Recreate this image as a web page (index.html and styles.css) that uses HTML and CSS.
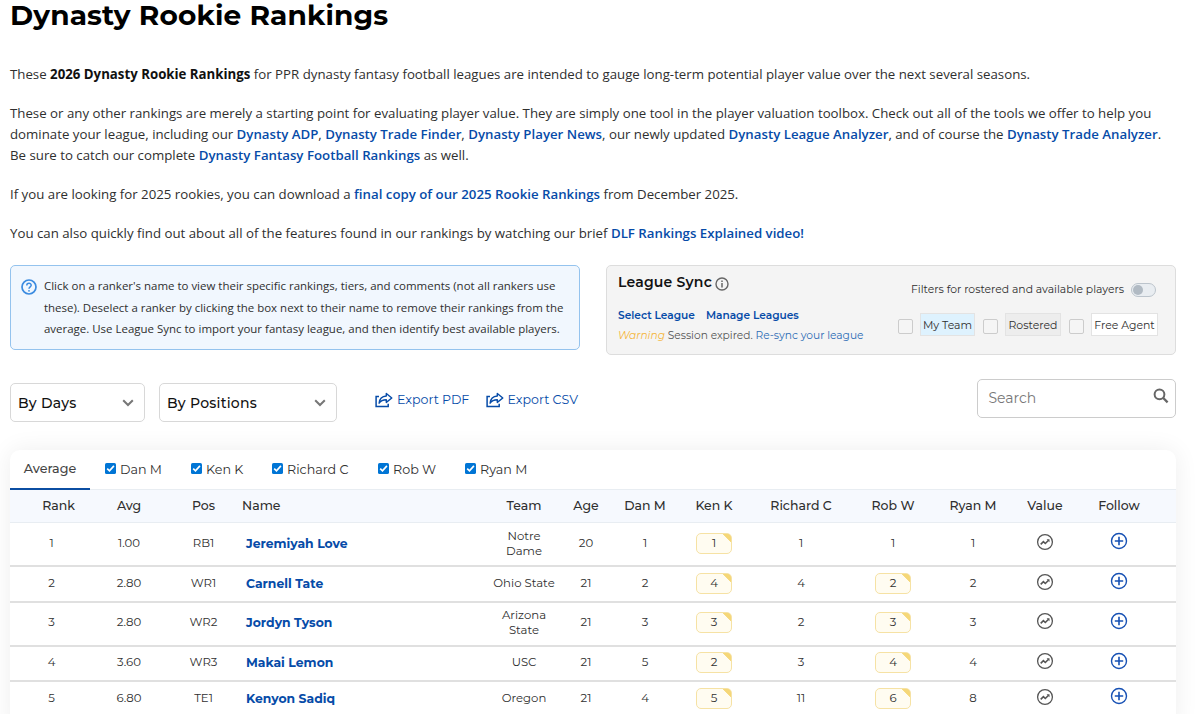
FILE: index.html
```
<!DOCTYPE html>
<html lang="en">
<head>
<meta charset="utf-8">
<title>Dynasty Rookie Rankings</title>
<link rel="stylesheet" href="styles.css">
</head>
<body>
<svg class="defs" aria-hidden="true">
  <symbol id="trend" viewBox="0 0 18 18"><circle cx="9" cy="9" r="7.4" fill="none" stroke="currentColor" stroke-width="1.3"/><path d="M4.7 11.3 7.4 8.7 9.3 10.5 12.6 7.2" fill="none" stroke="currentColor" stroke-width="1.6"/><path d="M10.6 6.3H13.5V9.2Z" fill="currentColor"/></symbol>
  <symbol id="plus" viewBox="0 0 18 18"><circle cx="9" cy="9" r="7.5" fill="none" stroke="currentColor" stroke-width="1.4"/><path d="M9 4.8V13.2M4.8 9H13.2" stroke="currentColor" stroke-width="1.6"/></symbol>
  <symbol id="share" viewBox="0 0 18 16"><path d="M4 4.5H1.1V14.4H13.2V11.8" fill="none" stroke="currentColor" stroke-width="1.5"/><path d="M11.3 1.5 16.8 6 11.3 10.4V7.8C8 7.8 5.8 8.6 4.1 11.2 4.5 7 7 4.3 11.3 4Z" fill="none" stroke="currentColor" stroke-width="1.4" stroke-linejoin="round"/></symbol>
  <symbol id="chev" viewBox="0 0 12 8"><path d="M1.2 1.2 6 6 10.8 1.2" fill="none" stroke="currentColor" stroke-width="2"/></symbol>
  <symbol id="check" viewBox="0 0 11 11"><rect width="11" height="11" rx="1.6" fill="#0075d5"/><path d="M2.2 5.6 4.5 7.9 8.9 2.9" fill="none" stroke="#fff" stroke-width="1.6"/></symbol>
</svg>
<main class="page">
  <h1>Dynasty Rookie Rankings</h1>
  <section class="intro">
    <p>These <strong>2026 Dynasty Rookie Rankings</strong> for PPR dynasty fantasy football leagues are intended to gauge long-term potential player value over the next several seasons.</p>
    <p>These or any other rankings are merely a starting point for evaluating player value. They are simply one tool in the player valuation toolbox. Check out all of the tools we offer to help you<br>dominate your league, including our <a>Dynasty ADP</a>, <a>Dynasty Trade Finder</a>, <a>Dynasty Player News</a>, our newly updated <a>Dynasty League Analyzer</a>, and of course the <a>Dynasty Trade Analyzer</a>.<br>Be sure to catch our complete <a>Dynasty Fantasy Football Rankings</a> as well.</p>
    <p>If you are looking for 2025 rookies, you can download a <a>final copy of our 2025 Rookie Rankings</a> from December 2025.</p>
    <p>You can also quickly find out about all of the features found in our rankings by watching our brief <a>DLF Rankings Explained video!</a></p>
  </section>

  <section class="panels">
    <div class="tip">
      <svg class="tip-icon" viewBox="0 0 16 16"><circle cx="8" cy="8" r="7" fill="none" stroke="currentColor" stroke-width="1.7"/><path d="M5.8 6.4C5.8 3.6 10.2 3.6 10.2 6.3 10.2 7.9 8 7.9 8 9.7" fill="none" stroke="currentColor" stroke-width="1.5"/><circle cx="8" cy="11.8" r=".9" fill="currentColor"/></svg>
      <p>Click on a ranker's name to view their specific rankings, tiers, and comments (not all rankers use<br>these). Deselect a ranker by clicking the box next to their name to remove their rankings from the<br>average. Use League Sync to import your fantasy league, and then identify best available players.</p>
    </div>
    <div class="sync">
      <div class="sync-left">
        <h2>League Sync<svg class="info" viewBox="0 0 14 14"><circle cx="7" cy="7" r="6" fill="none" stroke="currentColor" stroke-width="1.4"/><path d="M7 6V10.6M7 3.4V5" stroke="currentColor" stroke-width="1.5"/></svg></h2>
        <div class="sync-links"><a>Select League</a><a>Manage Leagues</a></div>
        <div class="sync-msg"><em>Warning</em> Session expired. <a>Re-sync your league</a></div>
      </div>
      <div class="sync-right">
        <div class="switch-row"><span>Filters for rostered and available players</span><i class="switch"></i></div>
        <div class="filters">
          <i class="box"></i><span class="chip mine">My Team</span>
          <i class="box"></i><span class="chip rostered">Rostered</span>
          <i class="box"></i><span class="chip free">Free Agent</span>
        </div>
      </div>
    </div>
  </section>

  <section class="tools">
    <div class="select days"><span>By Days</span><svg><use href="#chev"/></svg></div>
    <div class="select positions"><span>By Positions</span><svg><use href="#chev"/></svg></div>
    <div class="exports">
      <a><svg><use href="#share"/></svg>Export PDF</a>
      <a><svg><use href="#share"/></svg>Export CSV</a>
    </div>
    <div class="search"><span>Search</span><svg viewBox="0 0 16 16"><circle cx="6.5" cy="6.3" r="4.9" fill="none" stroke="currentColor" stroke-width="2"/><path d="M10 9.8 14.6 14.4" stroke="currentColor" stroke-width="2.3"/></svg></div>
  </section>

  <section class="card">
    <nav class="tabs">
      <span class="tab active">Average</span>
      <span class="tab t1"><svg><use href="#check"/></svg>Dan M</span>
      <span class="tab"><svg><use href="#check"/></svg>Ken K</span>
      <span class="tab"><svg><use href="#check"/></svg>Richard C</span>
      <span class="tab"><svg><use href="#check"/></svg>Rob W</span>
      <span class="tab"><svg><use href="#check"/></svg>Ryan M</span>
    </nav>
    <div class="row head"><span class="rank">Rank</span><span>Avg</span><span>Pos</span><span class="name">Name</span><span>Team</span><span>Age</span><span>Dan M</span><span>Ken K</span><span>Richard C</span><span>Rob W</span><span>Ryan M</span><span>Value</span><span>Follow</span></div>
    <div class="row tall"><span>1</span><span>1.00</span><span>RB1</span><a class="name">Jeremiyah Love</a><span class="team">Notre<br>Dame</span><span>20</span><span>1</span><b class="note">1</b><span>1</span><span>1</span><span>1</span><svg class="trend"><use href="#trend"/></svg><svg class="plus"><use href="#plus"/></svg></div>
    <div class="row"><span>2</span><span>2.80</span><span>WR1</span><a class="name">Carnell Tate</a><span>Ohio State</span><span>21</span><span>2</span><b class="note">4</b><span>4</span><b class="note">2</b><span>2</span><svg class="trend"><use href="#trend"/></svg><svg class="plus"><use href="#plus"/></svg></div>
    <div class="row tall"><span>3</span><span>2.80</span><span>WR2</span><a class="name">Jordyn Tyson</a><span class="team">Arizona<br>State</span><span>21</span><span>3</span><b class="note">3</b><span>2</span><b class="note">3</b><span>3</span><svg class="trend"><use href="#trend"/></svg><svg class="plus"><use href="#plus"/></svg></div>
    <div class="row"><span>4</span><span>3.60</span><span>WR3</span><a class="name">Makai Lemon</a><span>USC</span><span>21</span><span>5</span><b class="note">2</b><span>3</span><b class="note">4</b><span>4</span><svg class="trend"><use href="#trend"/></svg><svg class="plus"><use href="#plus"/></svg></div>
    <div class="row"><span>5</span><span>6.80</span><span>TE1</span><a class="name">Kenyon Sadiq</a><span>Oregon</span><span>21</span><span>4</span><b class="note">5</b><span>11</span><b class="note">6</b><span>8</span><svg class="trend"><use href="#trend"/></svg><svg class="plus"><use href="#plus"/></svg></div>
  </section>
</main>
</body>
</html>
```
FILE: styles.css
```
* { box-sizing: border-box; }
html, body { height: 714px; overflow: hidden; }
body { margin: 0; background: #fff; color: #2f2f2f; font-family: Montserrat, Inter, sans-serif; font-size: 12.5px; }
.defs { display: none; }
a { color: #064ba8; }
.page { padding: 0 24px 0 10px; }
h1 { margin: 0; height: 64px; font-size: 28px; line-height: 31px; font-weight: 700; color: #000; letter-spacing: .15px; white-space: nowrap; }

.intro { height: 201px; font-family: "Open Sans", sans-serif; font-size: 13.25px; line-height: 21.2px; }
.intro p { margin: 0 0 17.5px; white-space: nowrap; }
.intro strong { color: #111; }
.intro a { font-weight: 600; }

.panels { display: grid; grid-template-columns: 570px 570px; column-gap: 26px; align-items: start; height: 114px; }
.tip { display: flex; height: 85px; padding: 10px 0 0 10px; border: 1px solid #94c3ee; border-radius: 5px; background: #f1f7fe; }
.tip-icon { flex: none; width: 16px; height: 16px; margin: 3px 7px 0 0; color: #3b8be0; }
.tip p { margin: -1px 0 0; font-family: "Open Sans", sans-serif; font-size: 11.47px; line-height: 21.5px; white-space: nowrap; }
.sync { display: flex; justify-content: space-between; height: 90px; padding: 0 17px 0 11px; border: 1px solid #ddd; border-radius: 5px; background: #f4f4f4; white-space: nowrap; }
h2 { display: flex; align-items: center; margin: 7px 0 16px; font-size: 14px; line-height: 18px; font-weight: 600; color: #111; letter-spacing: .2px; }
.info { width: 14px; height: 14px; margin: 3px 0 0 3px; color: #666; }
.sync-links { display: flex; gap: 11px; font-size: 10.6px; line-height: 18px; font-weight: 600; }
.sync-msg { margin-top: 2px; font-size: 10.65px; line-height: 18px; color: #555; }
.sync-msg em { color: #f5b63c; }
.sync-msg a { color: #2c6cb4; }
.sync-right { display: flex; flex-direction: column; align-items: flex-end; }
.switch-row { display: flex; align-items: center; gap: 7px; height: 20px; margin: 13px 2px 14px 0; font-size: 10.8px; }
.switch { width: 25px; height: 14px; margin-top: 2px; padding: 1px; border: 1px solid #bcc4cc; border-radius: 7px; background: #e9edf1; }
.switch::before { content: ""; display: block; width: 10px; height: 10px; border-radius: 50%; background: #b1bac3; }
.filters { display: flex; align-items: center; height: 23px; font-size: 10.9px; }
.box { width: 15px; height: 15px; margin: 4px 7px 0 8px; border: 1px solid #ccc; border-radius: 2px; background: #f5f5f5; }
.chip { height: 23px; border: 1px solid #e3e3e3; line-height: 22px; text-align: center; }
.mine { width: 55px; background: #def2fe; }
.rostered { width: 56px; background: #ededed; }
.free { width: 67px; background: #fff; }

.tools { display: flex; align-items: flex-start; height: 71px; }
.select { display: flex; align-items: center; justify-content: space-between; height: 39px; margin: 4px 14px 0 0; padding: 0 10px 0 7px; border: 1px solid #d8d8d8; border-radius: 5px; font-size: 14px; font-weight: 500; color: #111; letter-spacing: .25px; }
.select svg { width: 12px; height: 8px; color: #777; }
.days { width: 135px; }
.positions { width: 178px; }
.exports { display: flex; gap: 16px; margin: 11px 0 0 24px; font-size: 12.6px; line-height: 20px; }
.exports a { display: flex; align-items: center; gap: 4px; width: 94.5px; white-space: nowrap; }
.exports svg { flex: none; width: 18px; height: 16px; }
.search { display: flex; justify-content: space-between; width: 199px; height: 39px; margin-left: auto; padding: 0 6px 0 10.5px; border: 1px solid #ccc; border-radius: 5px; font-size: 14px; line-height: 37px; color: #777; }
.search svg { width: 16px; height: 16px; margin-top: 8px; color: #666; }

.card { height: 280px; border-radius: 10px 10px 0 0; background: #fff; box-shadow: 0 0 24px rgba(0, 0, 0, .07); }
.tabs { display: grid; grid-template-columns: 80px 101px 81px 106px 87px 1fr; height: 39.5px; border-bottom: 1px solid #e8edf2; font-size: 12.7px; line-height: 39px; white-space: nowrap; }
.tab { display: flex; }
.tab svg { width: 11px; height: 11px; margin: 13px 4px 0 0; }
.t1 { padding-left: 15px; }
.active { justify-content: center; height: 39.5px; border-bottom: 2px solid #0b4da2; color: #444; font-weight: 500; line-height: 38px; }
.row { display: grid; grid-template-columns: 83px 72px 77px 238px 88px 36px 82px 56px 118px 66px 94px 50px 98px; align-items: center; justify-items: center; height: 35.5px; padding-bottom: 1px; border-bottom: 2px solid #e0e0e0; font-size: 11.7px; line-height: 15px; text-align: center; }
.row.tall { height: 44px; padding-bottom: 1.5px; }
.row.head { height: 33.5px; padding-bottom: 1px; border-bottom: 1px solid #e8edf2; background: #f6f9fe; font-size: 12.5px; font-weight: 500; white-space: nowrap; }
.head .rank { padding-left: 14px; }
.team { padding-top: 1px; }
.name { justify-self: start; padding-left: 4px; font-size: 12.4px; font-weight: 700; }
.head .name { padding-left: 0; font-size: inherit; font-weight: inherit; }
.note { width: 36px; height: 21px; border: 1px solid #f6e2a4; border-radius: 5px; background: linear-gradient(45deg, #fffcf1 84%, #f5d778 85%); font-weight: 400; line-height: 19px; }
.trend { width: 18px; height: 18px; margin-bottom: 3px; color: #555; }
.plus { width: 18px; height: 18px; margin-bottom: 4px; color: #1650b4; }
```
